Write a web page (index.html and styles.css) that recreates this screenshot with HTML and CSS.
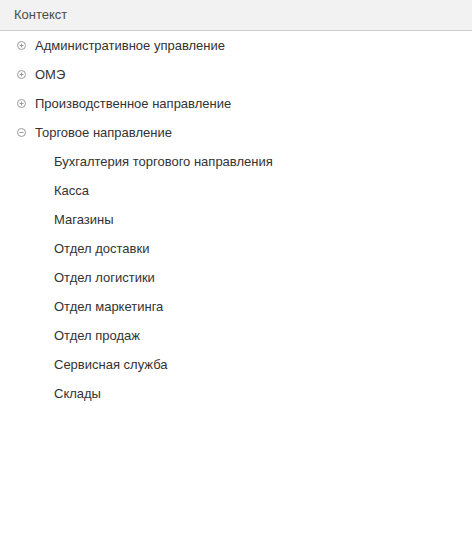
FILE: index.html
```html
<!DOCTYPE html>
<html>
<head>
<meta charset="utf-8">
<link rel="stylesheet" href="styles.css">
</head>
<body>
<div class="panel">
  <div class="header"><span class="title">Контекст</span></div>
  <ul class="tree">
    <li class="row"><span class="toggle"><svg width="9" height="9" viewBox="0 0 9 9"><circle cx="4.5" cy="4.5" r="4" fill="none" stroke="#9a9a9a"/><path d="M2.5 4.5h4M4.5 2.5v4" stroke="#9a9a9a"/></svg></span><span class="label">Административное управление</span></li>
    <li class="row"><span class="toggle"><svg width="9" height="9" viewBox="0 0 9 9"><circle cx="4.5" cy="4.5" r="4" fill="none" stroke="#9a9a9a"/><path d="M2.5 4.5h4M4.5 2.5v4" stroke="#9a9a9a"/></svg></span><span class="label">ОМЭ</span></li>
    <li class="row"><span class="toggle"><svg width="9" height="9" viewBox="0 0 9 9"><circle cx="4.5" cy="4.5" r="4" fill="none" stroke="#9a9a9a"/><path d="M2.5 4.5h4M4.5 2.5v4" stroke="#9a9a9a"/></svg></span><span class="label">Производственное направление</span></li>
    <li class="row"><span class="toggle"><svg width="9" height="9" viewBox="0 0 9 9"><circle cx="4.5" cy="4.5" r="4" fill="none" stroke="#9a9a9a"/><path d="M2.5 4.5h4" stroke="#9a9a9a"/></svg></span><span class="label">Торговое направление</span></li>
    <li class="row child"><span class="label">Бухгалтерия торгового направления</span></li>
    <li class="row child"><span class="label">Касса</span></li>
    <li class="row child"><span class="label">Магазины</span></li>
    <li class="row child"><span class="label">Отдел доставки</span></li>
    <li class="row child"><span class="label">Отдел логистики</span></li>
    <li class="row child"><span class="label">Отдел маркетинга</span></li>
    <li class="row child"><span class="label">Отдел продаж</span></li>
    <li class="row child"><span class="label">Сервисная служба</span></li>
    <li class="row child"><span class="label">Склады</span></li>
  </ul>
</div>
</body>
</html>
```
FILE: styles.css
```css
html, body {
  margin: 0;
  padding: 0;
  background: #fff;
}
.panel {
  width: 472px;
  height: 538px;
  font-family: Arial, "Liberation Sans", sans-serif;
}
.header {
  height: 31px;
  background: #f2f2f2;
  border-bottom: 1px solid #cdcdcd;
  display: flex;
  align-items: center;
  padding-left: 14px;
  box-sizing: border-box;
}
.title {
  font-size: 13px;
  color: #4a4a4a;
  padding-bottom: 2px;
}
.tree {
  list-style: none;
  margin: 0;
  padding: 0;
}
.row {
  height: 29px;
  display: flex;
  align-items: center;
  padding-left: 17px;
  font-size: 13px;
  color: #333;
}
.toggle {
  width: 18px;
  display: flex;
  align-items: center;
}
.toggle svg {
  display: block;
}
.row.child {
  padding-left: 54px;
}
.label {
  white-space: nowrap;
}
```
